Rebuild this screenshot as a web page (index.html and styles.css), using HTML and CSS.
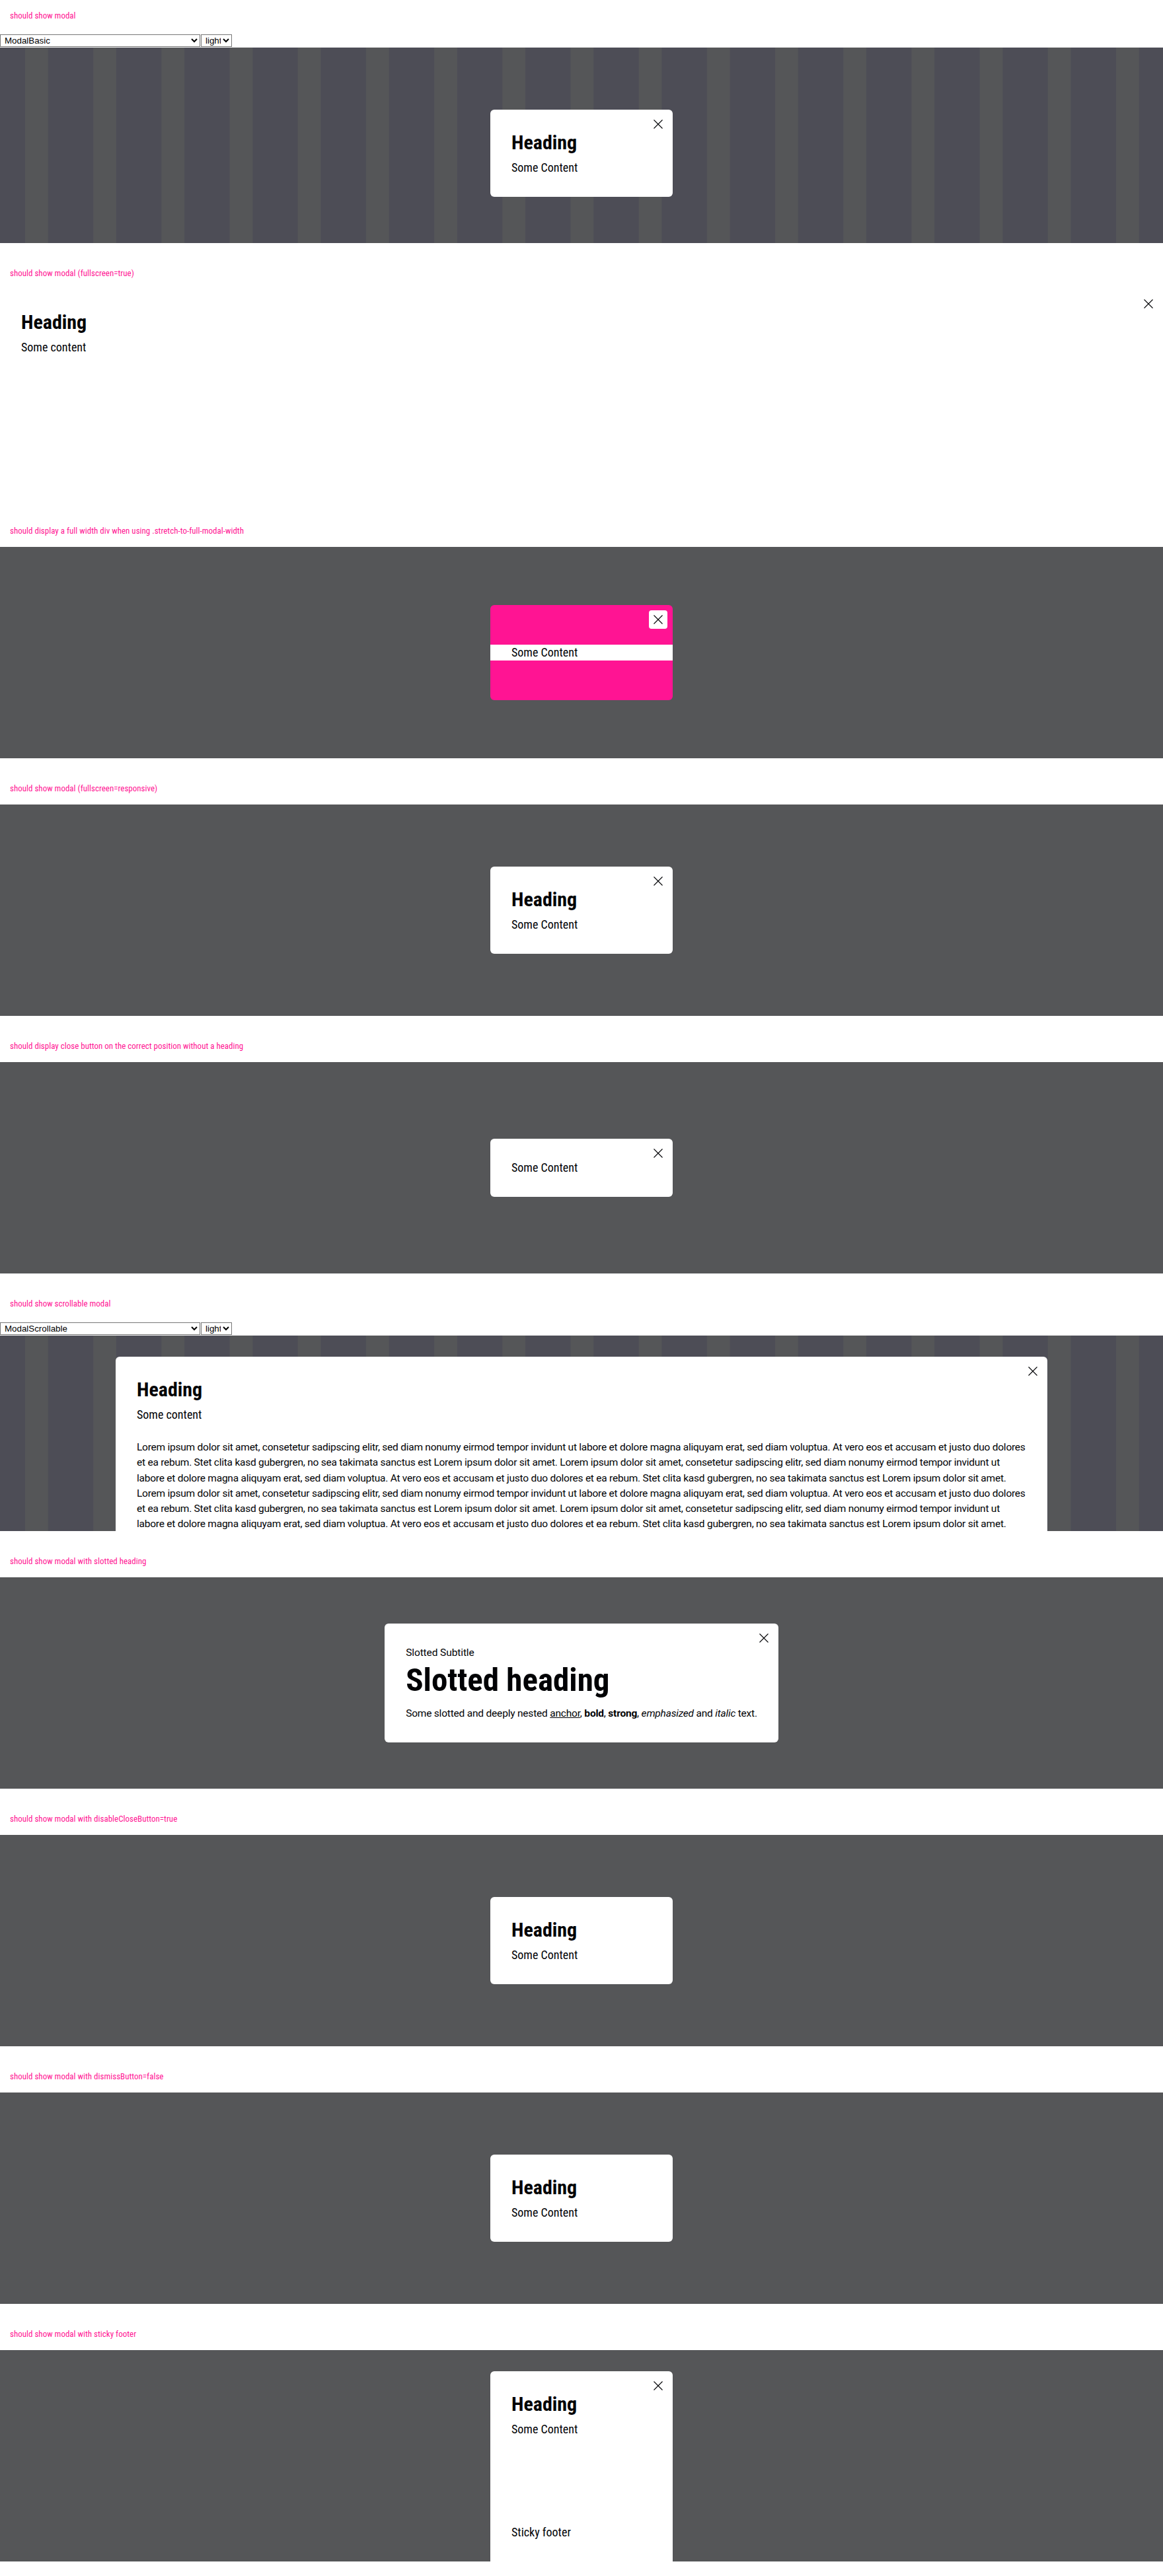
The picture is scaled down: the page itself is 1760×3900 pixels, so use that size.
FILE: index.html
```html
<!DOCTYPE html>
<html lang="en">
<head>
<meta charset="utf-8">
<title>Modal</title>
<link rel="stylesheet" href="styles.css">
</head>
<body>
<main class="page">

  <section class="case">
    <p class="case-title">should show modal</p>
    <div class="stage">
      <div class="controls">
        <select class="select-story"><option>ModalBasic</option></select><select class="select-theme"><option>light</option></select>
      </div>
      <div class="backdrop backdrop--striped">
        <div class="modal">
          <button class="modal-close" aria-label="Close"><svg viewBox="0 0 14 14" width="14" height="14"><path d="M0.5 0.5L13.5 13.5M13.5 0.5L0.5 13.5"/></svg></button>
          <h2 class="modal-heading">Heading</h2>
          <p class="modal-text">Some Content</p>
        </div>
      </div>
    </div>
  </section>

  <section class="case">
    <p class="case-title">should show modal (fullscreen=true)</p>
    <div class="stage stage--plain">
      <div class="modal modal--fullscreen">
        <button class="modal-close" aria-label="Close"><svg viewBox="0 0 14 14" width="14" height="14"><path d="M0.5 0.5L13.5 13.5M13.5 0.5L0.5 13.5"/></svg></button>
        <h2 class="modal-heading">Heading</h2>
        <p class="modal-text">Some content</p>
      </div>
    </div>
  </section>

  <section class="case">
    <p class="case-title">should display a full width div when using .stretch-to-full-modal-width</p>
    <div class="stage">
      <div class="backdrop">
        <div class="modal modal--pink">
          <button class="modal-close" aria-label="Close"><svg viewBox="0 0 14 14" width="14" height="14"><path d="M0.5 0.5L13.5 13.5M13.5 0.5L0.5 13.5"/></svg></button>
          <div class="stretch-to-full-modal-width">
            <p class="modal-text">Some Content</p>
          </div>
        </div>
      </div>
    </div>
  </section>

  <section class="case">
    <p class="case-title">should show modal (fullscreen=responsive)</p>
    <div class="stage">
      <div class="backdrop">
        <div class="modal">
          <button class="modal-close" aria-label="Close"><svg viewBox="0 0 14 14" width="14" height="14"><path d="M0.5 0.5L13.5 13.5M13.5 0.5L0.5 13.5"/></svg></button>
          <h2 class="modal-heading">Heading</h2>
          <p class="modal-text">Some Content</p>
        </div>
      </div>
    </div>
  </section>

  <section class="case">
    <p class="case-title">should display close button on the correct position without a heading</p>
    <div class="stage">
      <div class="backdrop">
        <div class="modal">
          <button class="modal-close" aria-label="Close"><svg viewBox="0 0 14 14" width="14" height="14"><path d="M0.5 0.5L13.5 13.5M13.5 0.5L0.5 13.5"/></svg></button>
          <p class="modal-text">Some Content</p>
        </div>
      </div>
    </div>
  </section>

  <section class="case">
    <p class="case-title">should show scrollable modal</p>
    <div class="stage">
      <div class="controls">
        <select class="select-story"><option>ModalScrollable</option></select><select class="select-theme"><option>light</option></select>
      </div>
      <div class="backdrop backdrop--striped backdrop--top">
        <div class="modal modal--wide">
          <button class="modal-close" aria-label="Close"><svg viewBox="0 0 14 14" width="14" height="14"><path d="M0.5 0.5L13.5 13.5M13.5 0.5L0.5 13.5"/></svg></button>
          <h2 class="modal-heading">Heading</h2>
          <p class="modal-text">Some content</p>
          <p class="modal-lorem">Lorem ipsum dolor sit amet, consetetur sadipscing elitr, sed diam nonumy eirmod tempor invidunt ut labore et dolore magna aliquyam erat, sed diam voluptua. At vero eos et accusam et justo duo dolores et ea rebum. Stet clita kasd gubergren, no sea takimata sanctus est Lorem ipsum dolor sit amet. Lorem ipsum dolor sit amet, consetetur sadipscing elitr, sed diam nonumy eirmod tempor invidunt ut labore et dolore magna aliquyam erat, sed diam voluptua. At vero eos et accusam et justo duo dolores et ea rebum. Stet clita kasd gubergren, no sea takimata sanctus est Lorem ipsum dolor sit amet. Lorem ipsum dolor sit amet, consetetur sadipscing elitr, sed diam nonumy eirmod tempor invidunt ut labore et dolore magna aliquyam erat, sed diam voluptua. At vero eos et accusam et justo duo dolores et ea rebum. Stet clita kasd gubergren, no sea takimata sanctus est Lorem ipsum dolor sit amet. Lorem ipsum dolor sit amet, consetetur sadipscing elitr, sed diam nonumy eirmod tempor invidunt ut labore et dolore magna aliquyam erat, sed diam voluptua. At vero eos et accusam et justo duo dolores et ea rebum. Stet clita kasd gubergren, no sea takimata sanctus est Lorem ipsum dolor sit amet.</p>
        </div>
      </div>
    </div>
  </section>

  <section class="case">
    <p class="case-title">should show modal with slotted heading</p>
    <div class="stage">
      <div class="backdrop">
        <div class="modal modal--auto">
          <button class="modal-close" aria-label="Close"><svg viewBox="0 0 14 14" width="14" height="14"><path d="M0.5 0.5L13.5 13.5M13.5 0.5L0.5 13.5"/></svg></button>
          <p class="modal-subtitle">Slotted Subtitle</p>
          <h2 class="modal-heading modal-heading--large">Slotted heading</h2>
          <p class="modal-body">Some slotted and deeply nested <a href="#">anchor</a>, <b>bold</b>, <strong>strong</strong>, <em>emphasized</em> and <i>italic</i> text.</p>
        </div>
      </div>
    </div>
  </section>

  <section class="case">
    <p class="case-title">should show modal with disableCloseButton=true</p>
    <div class="stage">
      <div class="backdrop">
        <div class="modal">
          <h2 class="modal-heading">Heading</h2>
          <p class="modal-text">Some Content</p>
        </div>
      </div>
    </div>
  </section>

  <section class="case">
    <p class="case-title">should show modal with dismissButton=false</p>
    <div class="stage">
      <div class="backdrop">
        <div class="modal">
          <h2 class="modal-heading">Heading</h2>
          <p class="modal-text">Some Content</p>
        </div>
      </div>
    </div>
  </section>

  <section class="case">
    <p class="case-title">should show modal with sticky footer</p>
    <div class="stage">
      <div class="backdrop backdrop--top">
        <div class="modal modal--sticky">
          <button class="modal-close" aria-label="Close"><svg viewBox="0 0 14 14" width="14" height="14"><path d="M0.5 0.5L13.5 13.5M13.5 0.5L0.5 13.5"/></svg></button>
          <h2 class="modal-heading">Heading</h2>
          <p class="modal-text">Some Content</p>
          <div class="modal-footer"><p class="modal-text">Sticky footer</p></div>
        </div>
      </div>
    </div>
  </section>

</main>
</body>
</html>
```

FILE: styles.css
```css
* {
  box-sizing: border-box;
}

html,
body {
  margin: 0;
  padding: 0;
  background: #fff;
}

body {
  font-family: Roboto, "Liberation Sans", sans-serif;
  color: #010205;
}

.page {
  width: 1760px;
}

.case {
  margin-bottom: 22px;
}

.case-title {
  margin: 0;
  height: 48px;
  padding: 16px 15px;
  font-family: "Roboto Condensed", Roboto, sans-serif;
  font-stretch: condensed;
  font-size: 13px;
  line-height: 16px;
  color: #ff1493;
  white-space: nowrap;
}

.stage {
  height: 320px;
  overflow: hidden;
  display: flex;
  flex-direction: column;
  background: #555658;
}

.stage--plain {
  background: #fff;
}

.controls {
  flex: 0 0 24px;
  display: flex;
  align-items: flex-start;
  gap: 1px;
  padding-top: 4px;
  background: #fff;
}

.controls select {
  margin: 0;
  height: 19px;
  padding: 0 0 0 2px;
  font: 13.333px "Liberation Sans", Arial, sans-serif;
  color: #000;
  background: #fff;
  border: 1px solid #767676;
  border-radius: 0;
}

.select-story {
  width: 303px;
}

.select-theme {
  width: 47px;
}

.backdrop {
  flex: 0 0 320px;
  display: flex;
  justify-content: center;
  align-items: center;
  background: #555658;
}

.backdrop--striped {
  background-color: #4d4d56;
  background-image: linear-gradient(to right, #555658 0, #555658 34.3px, #4d4d56 34.3px, #4d4d56 100%);
  background-size: 103.2px 100%;
  background-position: 38px 0;
}

.backdrop--top {
  align-items: flex-start;
  padding-top: 32px;
}

.modal {
  position: relative;
  flex: 0 0 auto;
  width: 276px;
  padding: 32px;
  background: #fff;
  border-radius: 6px;
}

.modal--fullscreen {
  flex: 1 1 auto;
  width: 100%;
  border-radius: 0;
}

.modal--pink {
  background: #ff1493;
}

.modal--wide {
  flex: 1 1 auto;
  width: auto;
  margin: 0 175px;
}

.modal--auto {
  width: auto;
  min-width: 276px;
}

.modal--sticky {
  height: 288px;
  display: flex;
  flex-direction: column;
  border-radius: 6px 6px 0 0;
}

.modal-close {
  position: absolute;
  top: 8px;
  right: 8px;
  width: 28px;
  height: 28px;
  padding: 7px;
  border: 0;
  border-radius: 4px;
  background: #fff;
  cursor: pointer;
}

.modal-close svg {
  display: block;
  fill: none;
  stroke: #010205;
  stroke-width: 1.1;
}

.modal-heading {
  margin: 0 0 8px;
  font-family: "Roboto Condensed", Roboto, sans-serif;
  font-stretch: condensed;
  font-weight: 700;
  font-size: 30px;
  line-height: 36px;
  color: #010205;
}

.modal-heading--large {
  margin: 2px 0 10px;
  font-size: 49px;
  line-height: 56px;
}

.modal-text {
  margin: 0;
  font-family: "Roboto Condensed", Roboto, sans-serif;
  font-stretch: condensed;
  font-size: 18px;
  line-height: 24px;
}

.stretch-to-full-modal-width {
  margin: 28px -32px;
  padding: 0 32px;
  background: #fff;
}

.modal-lorem {
  margin: 26px 0 0;
  font: 15.5px/23.3px Roboto, sans-serif;
  letter-spacing: -0.24px;
}

.modal-subtitle {
  margin: 0;
  font: 15.5px/24px Roboto, sans-serif;
  letter-spacing: -0.1px;
}

.modal-body {
  margin: 0;
  font: 15.5px/24px Roboto, sans-serif;
  letter-spacing: -0.2px;
  white-space: nowrap;
}

.modal-body a {
  color: inherit;
  text-decoration: underline;
}

.modal-footer {
  margin-top: auto;
}
```
